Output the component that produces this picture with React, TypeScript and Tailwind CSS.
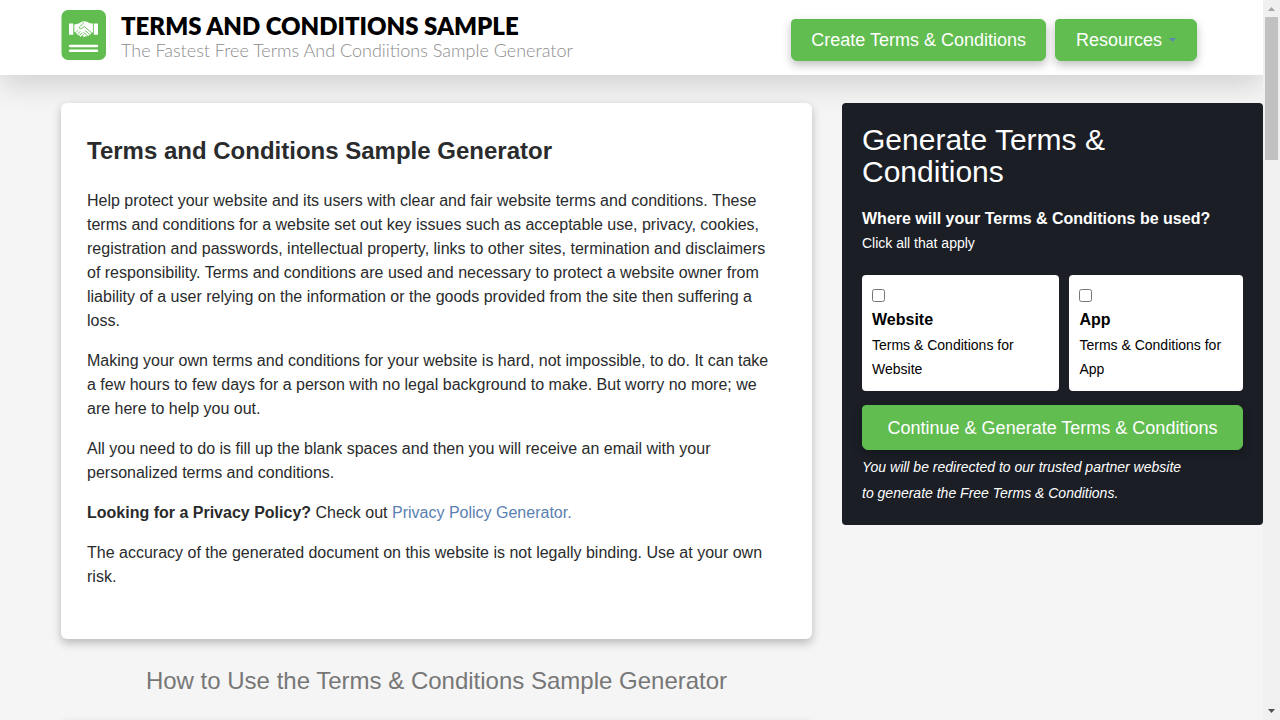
import React from "react";

const greenButton =
  "rounded-md rounded-tl-sm border border-[#5fbd4f] bg-[#61bd4f] text-lg text-white shadow-[0_4px_10px_rgba(0,0,0,0.25)]";

function Logo() {
  return (
    <a href="#home" className="flex items-start gap-[15px]">
      <svg width="45" height="50" viewBox="0 0 45 50" aria-hidden="true">
        <rect x="0.500" width="44.500" height="50" rx="6.500" fill="#61bd4f" />
        <g fill="#fff">
          <path d="M8 13.500h4.300v11.300H8zM32.800 13.500h4.200v11.300h-4.200z" />
          <path d="M13.300 14.400l3.700-.6 4.700-2.300c2.200-.7 4.500.3 7.200 1.700l3 .4v8.800l-1.700.4c.4 1.300-.6 2-1.700 1.600-.1 1.200-1.100 1.500-2 1-.3 1.200-1.300 1.300-2.100.7-.4 1.100-1.500 1.200-2.200.5l-1.200-1.100-.6 1c-.8.8-1.800.1-1.500-.9-.9.6-1.700-.1-1.500-1-.9.5-1.700-.2-1.500-1.100-.9.300-1.500-.5-1.200-1.300l-1.400-.4z" />
        </g>
        <g fill="none" stroke="#61bd4f" strokeWidth="0.900" strokeLinecap="round" strokeLinejoin="round">
          <path d="M22.800 12.800l-4.300 4c-.9 1.200.1 2.100 1.400 1.800 1.400-.3 2.300-1.300 3.500-2.100l7 6.100" />
          <path d="M24.500 21l3.800 3M22.900 22.800l3.300 2.700M15.200 22.200l1.700-1.700M17 23.800l2-2.200M18.900 25.200l2-2.200M20.500 26.500l1.600-1.900" />
        </g>
        <g fill="#fff">
          <rect x="7.800" y="34.700" width="29.400" height="2.500" rx="1.250" />
          <rect x="7.800" y="39.400" width="29.400" height="2.500" rx="1.250" />
        </g>
      </svg>
      <span className="flex flex-col pt-1 font-['Lato',sans-serif]">
        <span className="text-2xl leading-6 font-extrabold text-black">TERMS AND CONDITIONS SAMPLE</span>
        <span className="text-lg leading-6 font-light text-[#8c8c8c]">
          The Fastest Free Terms And Condiitions Sample Generator
        </span>
      </span>
    </a>
  );
}

function Header() {
  return (
    <header className="flex h-[75px] shrink-0 items-start justify-between bg-white pt-[10px] pr-[66px] pl-[61px] whitespace-nowrap shadow-[0_10px_30px_rgba(0,0,0,0.15)]">
      <Logo />
      <nav className="flex gap-[9px] pt-[9px]">
        <button type="button" className={greenButton + " h-[42px] px-[19px]"}>
          Create Terms &amp; Conditions
        </button>
        <button type="button" className={greenButton + " flex h-[42px] items-center gap-[7px] px-5"}>
          Resources
          <svg width="7" height="4" viewBox="0 0 7 4" aria-hidden="true">
            <path d="M0 0h7L3.5 4z" fill="#5b86ad" />
          </svg>
        </button>
      </nav>
    </header>
  );
}

function Article() {
  return (
    <article className="rounded-md bg-white pt-8 pr-8 pb-[50px] pl-[26px] leading-6 shadow-[0_4px_10px_rgba(0,0,0,0.25)]">
      <h1 className="mb-[22px] text-2xl font-bold">Terms and Conditions Sample Generator</h1>
      <div className="flex flex-col gap-4">
        <p>
          Help protect your website and its users with clear and fair website terms and conditions. These terms and
          conditions for a website set out key issues such as acceptable use, privacy, cookies, registration and
          passwords, intellectual property, links to other sites, termination and disclaimers of responsibility. Terms
          and conditions are used and necessary to protect a website owner from liability of a user relying on the
          information or the goods provided from the site then suffering a loss.
        </p>
        <p>
          Making your own terms and conditions for your website is hard, not impossible, to do. It can take a few hours
          to few days for a person with no legal background to make. But worry no more; we are here to help you out.
        </p>
        <p>
          All you need to do is fill up the blank spaces and then you will receive an email with your personalized terms
          and conditions.
        </p>
        <p>
          <strong>Looking for a Privacy Policy?</strong> Check out{" "}
          <a href="#privacy" className="text-[#5b80b2]">
            Privacy Policy Generator.
          </a>
        </p>
        <p>
          The accuracy of the generated document on this website is not legally binding. Use at your own risk.
        </p>
      </div>
    </article>
  );
}

function Option({ name }: { name: string }) {
  return (
    <label className="block rounded bg-white px-[10px] pt-[14px] pb-[10px] text-black">
      <input type="checkbox" className="mb-[6px] block size-[13px]" />
      <strong className="block text-base leading-6">{name}</strong>
      <span className="mt-px block text-sm leading-6">Terms &amp; Conditions for {name}</span>
    </label>
  );
}

function GeneratorForm() {
  return (
    <form className="rounded bg-[#1b1e25] px-5 pt-[21px] pb-[19px] text-white">
      <h2 className="text-3xl leading-8">Generate Terms &amp; Conditions</h2>
      <fieldset className="mt-[19px]">
        <legend className="font-bold leading-6">Where will your Terms &amp; Conditions be used?</legend>
        <p className="text-sm leading-6">Click all that apply</p>
        <div className="mt-5 grid grid-cols-[198fr_174fr] gap-[10px]">
          <Option name="Website" />
          <Option name="App" />
        </div>
      </fieldset>
      <button type="button" className={greenButton + " mt-[14px] h-[45px] w-full"}>
        Continue &amp; Generate Terms &amp; Conditions
      </button>
      <p className="mt-1 text-sm leading-[26px] italic">
        You will be redirected to our trusted partner website
        <br />
        to generate the Free Terms &amp; Conditions.
      </p>
    </form>
  );
}

function Scrollbar() {
  return (
    <div className="flex w-[17px] shrink-0 flex-col items-center bg-[#f0f0f0]" aria-hidden="true">
      <svg width="17" height="17" viewBox="0 0 17 17">
        <path d="M5 11h7L8.500 7z" fill="#a3a3a3" />
      </svg>
      <div className="h-[143px] w-[13px] bg-[#c1c1c1]" />
      <svg className="mt-auto" width="17" height="17" viewBox="0 0 17 17">
        <path d="M5 6h7L8.500 10z" fill="#505050" />
      </svg>
    </div>
  );
}

export default function App() {
  return (
    <div className="flex h-screen overflow-hidden bg-[#f5f5f5] font-['Liberation_Sans',Arial,sans-serif] text-[#292b2c]">
      <div className="flex min-w-0 flex-1 flex-col overflow-hidden">
        <Header />
        <main className="grid grid-cols-[751fr_421fr] items-start gap-[30px] pt-7 pl-[61px]">
          <div>
            <Article />
            <h2 className="mt-[26px] text-center text-2xl text-[#777]">
              How to Use the Terms &amp; Conditions Sample Generator
            </h2>
            <section className="mt-6 h-20 rounded-md bg-white shadow-[0_4px_10px_rgba(0,0,0,0.25)]" />
          </div>
          <GeneratorForm />
        </main>
      </div>
      <Scrollbar />
    </div>
  );
}
